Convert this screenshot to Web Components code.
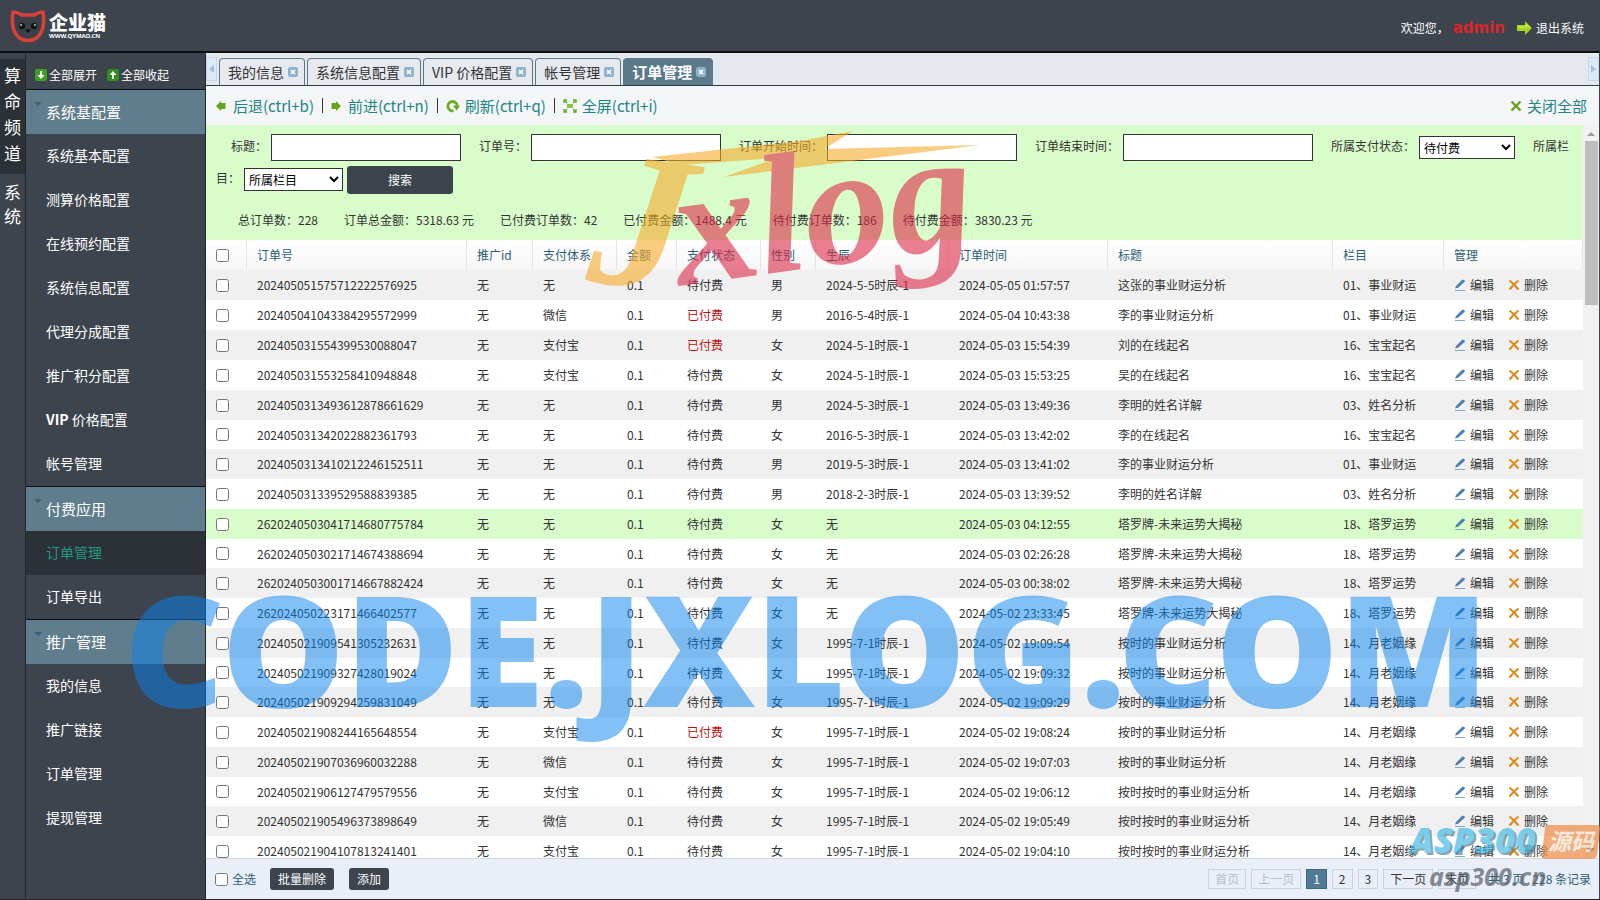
<!DOCTYPE html>
<html lang="zh-CN">
<head>
<meta charset="utf-8">
<title>订单管理</title>
<style>
html,body{margin:0;height:100%}
body{font:12px/20px "Noto Sans CJK SC","Liberation Sans",sans-serif;color:#333;background:#3d444e;overflow:hidden}
</style>
</head>
<body>
<admin-app></admin-app>
<script>
const define = (name, html, setup) => {
  const tpl = document.createElement('template');
  tpl.innerHTML = '<style>*{box-sizing:border-box}a{color:inherit;text-decoration:none}button,input,select{font:inherit;margin:0}svg{display:block;flex:none}</style>' + html;
  customElements.define(name, class extends HTMLElement {
    connectedCallback() {
      if (this.shadowRoot) return;
      this.attachShadow({mode: 'open'}).append(tpl.content.cloneNode(true));
      if (setup) setup(this.shadowRoot, this);
    }
  });
};

const icons = {
  left: '<svg width="10" height="10" viewBox="0 0 10 10"><path d="M0 5 5 0V2H9.5V8H5V10Z" fill="#62a51d"/></svg>',
  right: '<svg width="10" height="10" viewBox="0 0 10 10"><path d="M10 5 5 0V2H.5V8H5V10Z" fill="#62a51d"/></svg>',
  refresh: '<svg width="14" height="14" viewBox="0 0 14 14"><path d="M7.500 11.800A4.700 4.700 0 1 1 11.200 6.500" fill="none" stroke="#6bac22" stroke-width="2.800"/><path d="M7 6.500H14L10.800 11.500Z" fill="#62a51d"/></svg>',
  full: '<svg width="14" height="14" viewBox="0 0 14 14"><path d="M1 4V1H4M10 1H13V4M13 10V13H10M4 13H1V10M2 2 4 4M12 2 10 4M2 12 4 10M12 12 10 10" fill="none" stroke="#62a51d" stroke-width="1.300"/><rect x="4" y="5" width="6" height="4" fill="#8cc63f"/></svg>',
  close: '<svg width="12" height="12" viewBox="0 0 12 12"><path d="M1.500 1.500 10.500 10.500M10.500 1.500 1.500 10.500" stroke="#6a9e1f" stroke-width="2.400"/></svg>',
  exit: '<svg width="15" height="14" viewBox="0 0 15 14"><path d="M0 4H8V0L15 7 8 14V10H0Z" fill="#a4d41c"/><path d="M1 6H9.500V3.500L13 7" fill="none" stroke="#d2ee6a"/></svg>',
  x: '<svg width="10" height="10" viewBox="0 0 10 10"><rect width="10" height="10" rx="2" fill="#8fb3ca"/><path d="M3 3 7 7M7 3 3 7" stroke="#fff" stroke-width="1.600"/></svg>',
  edit: '<svg width="12" height="12" viewBox="0 0 12 12"><path d="M1 9.500 2 7 8.500 .5 11 1.500 10.500 3 4 8.800Z" fill="#4d7fb0"/><path d="M1 11.500H11" stroke="#7fa9c9"/></svg>',
  del: '<svg width="12" height="12" viewBox="0 0 12 12"><path d="M1.500 1.500Q6 5 10.500 10.500M10.500 1.500Q5 6 1.500 10.500" fill="none" stroke="#dd8a1e" stroke-width="2.200"/></svg>',
  expand: '<svg width="12" height="12" viewBox="0 0 12 12"><rect width="12" height="12" rx="2" fill="#3f9d23"/><path d="M5 2H7V6H9.500L6 10 2.500 6H5Z" fill="#fff"/></svg>',
  collapse: '<svg width="12" height="12" viewBox="0 0 12 12"><rect width="12" height="12" rx="2" fill="#2f8e1f"/><path d="M5 10H7V6H9.500L6 2 2.500 6H5Z" fill="#fff"/></svg>'
};

define('ui-icon', '<style>:host{display:inline-flex;flex:none}</style>', (r, el) => {
  r.append(document.createRange().createContextualFragment(icons[el.getAttribute('name')]));
});

define('app-header', `
<style>
:host{display:flex;align-items:center;justify-content:space-between;height:53px;flex:none;border-bottom:2px solid #0c0e11;background:#3d444e;color:#fff;padding:0 16px 0 10px}
.logo{display:flex;gap:3px;align-items:center}
.name b{display:block;font-size:19px;line-height:20px;font-weight:900}
.name small{display:block;font:bold 6px/8px "Noto Sans",sans-serif}
.user{display:flex;align-items:center;gap:4px;padding-top:4px}
.user b{font:bold 15px/20px "DejaVu Sans",sans-serif;color:#d9282b;margin-right:8px}
a{display:flex;align-items:center;gap:4px}
</style>
<div class="logo">
<svg width="36" height="34" viewBox="0 0 36 34"><path d="M3 3C8 3 9 5 12 6H24C27 5 28 3 33 3 34 9 34 14 32.500 20 30 28 24 31.500 18 31.500S6 28 3.500 20C2 14 2 9 3 3Z" fill="#3d3f47" stroke="#d8413a" stroke-width="3.600" stroke-linejoin="round"/><circle cx="12" cy="17" r="3.200" fill="#14181c"/><circle cx="24" cy="17" r="3.200" fill="#14181c"/><circle cx="11" cy="16" r="1" fill="#b8c4c8"/><circle cx="25" cy="16" r="1" fill="#b8c4c8"/><path d="M15 20.500H21L18 24Z" fill="#0b0d10"/></svg>
<div class="name"><b>企业猫</b><small>WWW.QYMAO.CN</small></div>
</div>
<div class="user"><span>欢迎您，</span><b>admin</b><a href="#"><ui-icon name="exit"></ui-icon>退出系统</a></div>`);

define('channel-rail', `
<style>
:host{display:flex;flex-direction:column;width:26px;flex:none;padding-top:6px;font-size:17px;color:#fff;border-right:1px solid #22262c}
a{display:block;text-align:center;padding:3px 4px 8px;line-height:26px}
.on{background:#2c3037}
a+a{line-height:24px;padding-top:6px}
</style><a class="on" href="#">算命频道</a><a href="#">系统</a>`);

define('side-group', `
<style>
:host{display:block;border-top:1px solid #0c0e11}
h2{position:relative;margin:0;font-size:15px;font-weight:400;line-height:44px;padding-left:20px;background:#5f7d8c;color:#fff}
h2::before{content:"";position:absolute;left:8px;top:12px;border:4px solid transparent;border-top-color:#36627d}
</style><h2></h2><slot></slot>`, (r, el) => { r.querySelector('h2').textContent = el.getAttribute('label'); });

define('side-item', `
<style>
:host{display:block;font-size:14px;color:#fff}
:host([on]){background:#2c3037;color:#1d9a80}
a{display:block;line-height:42px;padding:0 0 2px 20px}
</style><a href="#"><slot></slot></a>`);

define('side-menu', `
<style>
:host{display:block;width:180px;flex:none;border-right:1px solid #22262c}
.top{display:flex;gap:10px;height:36px;padding:7px 0 0 9px;color:#fff}
.top a{display:flex;align-items:center;gap:2px;line-height:30px;height:30px}
</style>
<div class="top"><a href="#"><ui-icon name="expand"></ui-icon>全部展开</a><a href="#"><ui-icon name="collapse"></ui-icon>全部收起</a></div>
<side-group label="系统基配置"><side-item>系统基本配置</side-item><side-item>测算价格配置</side-item><side-item>在线预约配置</side-item><side-item>系统信息配置</side-item><side-item>代理分成配置</side-item><side-item>推广积分配置</side-item><side-item><b>VIP</b> 价格配置</side-item><side-item>帐号管理</side-item></side-group>
<side-group label="付费应用"><side-item on>订单管理</side-item><side-item>订单导出</side-item></side-group>
<side-group label="推广管理"><side-item>我的信息</side-item><side-item>推广链接</side-item><side-item>订单管理</side-item><side-item>提现管理</side-item></side-group>`);

define('tab-item', `
<style>
:host{display:flex;align-items:center;gap:4px;height:27px;padding:0 6px 0 8px;border:1px solid #5d7a8a;border-bottom:0;border-radius:4px 4px 0 0;background:#e6e9ee;font-size:14px}
:host([on]){background:#5a7989;color:#fff;font-weight:700;font-size:15px}
button{border:0;padding:0;background:none;display:flex}
</style><a href="#"><slot></slot></a><button aria-label="关闭"><ui-icon name="x"></ui-icon></button>`);

define('tab-strip', `
<style>
:host{display:flex;align-items:flex-end;gap:2px;height:33px;background:#e5e9ee;border-bottom:1px solid #2d3b47;flex:none}
.nav{width:11px;height:24px;border:1px solid #c3d6ee;background:#dce9f8;padding:0;display:flex;align-items:center;justify-content:center;margin-bottom:4px}
.end{margin-left:auto}
</style>
<button class="nav" aria-label="向左"><svg width="5" height="8"><path d="M5 0V8L0 4Z" fill="#a3bfe0"/></svg></button>
<tab-item>我的信息</tab-item><tab-item>系统信息配置</tab-item><tab-item>VIP 价格配置</tab-item><tab-item>帐号管理</tab-item><tab-item on>订单管理</tab-item>
<button class="nav end" aria-label="向右"><svg width="5" height="8"><path d="M0 0V8L5 4Z" fill="#a3bfe0"/></svg></button>`);

define('tool-bar', `
<style>
:host{display:flex;align-items:center;height:39px;flex:none;background:#f3f5f7;padding:0 12px 0 10px;color:#1c8583;font-size:15px}
a{display:flex;align-items:center;gap:7px}
a.n{gap:5px}
i{width:1px;height:15px;background:#333;margin:0 8px}
a:last-child{margin-left:auto}
</style>
<a href="#"><ui-icon name="left"></ui-icon>后退(ctrl+b)</a><i></i><a href="#"><ui-icon name="right"></ui-icon>前进(ctrl+n)</a><i></i><a class="n" href="#"><ui-icon name="refresh"></ui-icon>刷新(ctrl+q)</a><i></i><a class="n" href="#"><ui-icon name="full"></ui-icon>全屏(ctrl+i)</a>
<a class="n" href="#"><ui-icon name="close"></ui-icon>关闭全部</a>`);

define('order-filter', `
<style>
:host{display:block;background:#d9fdca;padding:5px 8px 5px 10px;height:115px}
form{line-height:32px}
label{margin-left:18px}
label:first-child{margin-left:15px}
input{width:190px;height:27px;border:1px solid #333;background:#fff;margin-left:4px;padding:0 4px;vertical-align:middle}
select{width:96px;height:23px;border:1px solid #333;border-radius:0;background:#fff;color:#000;margin-left:4px;vertical-align:middle}
button{width:106px;height:28px;line-height:20px;border:0;border-radius:3px;background:#3d444e;color:#fff;margin-left:4px;vertical-align:middle}
.w{width:99px}
.stats{display:flex;gap:26px;padding:16px 0 0 22px;line-height:20px}
.stats span{white-space:pre}
</style>
<form onsubmit="return false"><label for="a">标题：</label><input id="a"><label for="b">订单号：</label><input id="b"><label for="c">订单开始时间：</label><input id="c"><label for="d">订单结束时间：</label><input id="d"><label for="e">所属支付状态：</label><select id="e"><option>待付费</option></select><label for="f">所属栏目：</label><select id="f" class="w"><option>所属栏目</option></select><button>搜索</button></form>
<div class="stats"><span>总订单数：228</span><span>订单总金额：5318.63 元</span><span>已付费订单数：42</span><span>已付费金额：1488.4 元</span><span>待付费订单数：186</span><span>待付费金额：3830.23 元</span></div>`);

const rows = `202405051575712222576925|无|待付费|男|2024-5-5时辰-1|05-05 01:57:57|这张的事业财运分析|01、事业财运
202405041043384295572999|微信|已付费|男|2016-5-4时辰-1|05-04 10:43:38|李的事业财运分析|01、事业财运
202405031554399530088047|支付宝|已付费|女|2024-5-1时辰-1|05-03 15:54:39|刘的在线起名|16、宝宝起名
202405031553258410948848|支付宝|待付费|女|2024-5-1时辰-1|05-03 15:53:25|吴的在线起名|16、宝宝起名
2024050313493612878661629|无|待付费|男|2024-5-3时辰-1|05-03 13:49:36|李明的姓名详解|03、姓名分析
202405031342022882361793|无|待付费|女|2016-5-3时辰-1|05-03 13:42:02|李的在线起名|16、宝宝起名
2024050313410212246152511|无|待付费|男|2019-5-3时辰-1|05-03 13:41:02|李的事业财运分析|01、事业财运
202405031339529588839385|无|待付费|男|2018-2-3时辰-1|05-03 13:39:52|李明的姓名详解|03、姓名分析
2620240503041714680775784|无|待付费|女|无|05-03 04:12:55|塔罗牌-未来运势大揭秘|18、塔罗运势
2620240503021714674388694|无|待付费|女|无|05-03 02:26:28|塔罗牌-未来运势大揭秘|18、塔罗运势
2620240503001714667882424|无|待付费|女|无|05-03 00:38:02|塔罗牌-未来运势大揭秘|18、塔罗运势
262024050223171466402577|无|待付费|女|无|05-02 23:33:45|塔罗牌-未来运势大揭秘|18、塔罗运势
202405021909541305232631|无|待付费|女|1995-7-1时辰-1|05-02 19:09:54|按时的事业财运分析|14、月老姻缘
202405021909327428019024|无|待付费|女|1995-7-1时辰-1|05-02 19:09:32|按时的事业财运分析|14、月老姻缘
202405021909294259831049|无|待付费|女|1995-7-1时辰-1|05-02 19:09:29|按时的事业财运分析|14、月老姻缘
202405021908244165648554|支付宝|已付费|女|1995-7-1时辰-1|05-02 19:08:24|按时的事业财运分析|14、月老姻缘
202405021907036960032288|微信|待付费|女|1995-7-1时辰-1|05-02 19:07:03|按时的事业财运分析|14、月老姻缘
202405021906127479579556|支付宝|待付费|女|1995-7-1时辰-1|05-02 19:06:12|按时按时的事业财运分析|14、月老姻缘
202405021905496373898649|微信|待付费|女|1995-7-1时辰-1|05-02 19:05:49|按时按时的事业财运分析|14、月老姻缘
202405021904107813241401|支付宝|待付费|女|1995-7-1时辰-1|05-02 19:04:10|按时按时的事业财运分析|14、月老姻缘`.split('\n').map(l => l.split('|'));

define('order-table', `
<style>
:host{display:block}
table{width:100%;table-layout:fixed;border-collapse:separate;border-spacing:0}
th,td{padding:0 0 0 10px;text-align:left;font-weight:400;white-space:nowrap;line-height:20px;height:30px}
th{color:#2c6078;background:linear-gradient(#fff,#f6f6f6);border-right:1px solid #e6e6e6}
tbody tr{background:#fff}
tbody tr:nth-child(odd){background:#f0f0f0}
tbody tr:nth-child(9){background:#d9fdca}
tr:nth-child(4n+6) td{height:29px}
input{display:block;width:13px;height:13px}
.paid{color:#c00e0e}
.ops{display:flex;gap:14px}
.ops a{display:flex;align-items:center;gap:4px}
</style>
<table><colgroup><col style="width:41px"><col style="width:220px"><col style="width:66px"><col style="width:84px"><col style="width:60px"><col style="width:84px"><col style="width:55px"><col style="width:133px"><col style="width:159px"><col><col style="width:111px"><col style="width:139px"></colgroup>
<thead><tr><th><input type="checkbox" aria-label="全选"></th><th>订单号</th><th>推广id</th><th>支付体系</th><th>金额</th><th>支付状态</th><th>性别</th><th>生辰</th><th>订单时间</th><th>标题</th><th>栏目</th><th>管理</th></tr></thead><tbody></tbody></table>`, r => {
  r.querySelector('tbody').innerHTML = rows.map(([id, pay, st, sex, born, time, title, cat]) =>
    `<tr><td><input type="checkbox" aria-label="${id}"></td><td>${id}</td><td>无</td><td>${pay}</td><td>0.1</td><td${st === '已付费' ? ' class="paid"' : ''}>${st}</td><td>${sex}</td><td>${born}</td><td>2024-${time}</td><td>${title}</td><td>${cat}</td><td><div class="ops"><a href="#"><ui-icon name="edit"></ui-icon>编辑</a><a href="#"><ui-icon name="del"></ui-icon>删除</a></div></td></tr>`).join('');
});

define('page-footer', `
<style>
:host{display:flex;align-items:center;justify-content:space-between;height:41px;flex:none;background:#e9eef8;border-top:1px solid #cddbe0;padding:0 8px 0 9px;color:#2c6078}
div{display:flex;align-items:center}
label{display:flex;align-items:center;gap:4px}
input{width:13px;height:13px}
.act button{height:22px;border:0;border-radius:3px;background:#3d444e;color:#fff;padding:0 8px;margin-right:15px}
.act label{margin-right:14px}
nav{display:flex;align-items:center;gap:5px;color:#333}
nav a,nav span{border:1px solid #cbd3de;line-height:18px;padding:0 6px}
nav span{color:#b9bfc9}
nav .on{background:#4f7b97;border-color:#3d6681;color:#fff}
p{margin:0 0 0 12px;white-space:pre}
</style>
<div class="act"><label><input type="checkbox">全选</label><button>批量删除</button><button>添加</button></div>
<div><nav><span>首页</span><span>上一页</span><a class="on" href="#">1</a><a href="#">2</a><a href="#">3</a><a href="#">下一页</a><a href="#">末页</a></nav><p>共 3 页   228 条记录</p></div>`);

define('scroll-rail', `
<style>
:host{display:flex;flex-direction:column;align-items:center;width:16px;flex:none;background:#f1f1f1}
svg{margin:7px 0 5px}
div{width:13px;height:164px;background:#bdbdbd}
svg:last-child{margin:auto 0 6px}
</style><svg width="8" height="4"><path d="M0 4H8L4 0Z" fill="#9a9a9a"/></svg><div></div><svg width="8" height="4"><path d="M0 0H8L4 4Z" fill="#555"/></svg>`);

define('water-marks', `
<style>
:host{position:absolute;inset:0;pointer-events:none;overflow:hidden}
svg{position:absolute;left:0;top:0;overflow:visible}
</style>
<svg width="1600" height="900" viewBox="0 0 1600 900">
<text x="124" y="707" font-family="Noto Sans" font-weight="900" font-size="155" fill="#0883ef" opacity=".5">CODE.JXLOG.COM</text>
<g opacity=".6">
<path d="M652 157 800 141 853 131 824 149 980 145 724 177 776 158 682 165Z" fill="#f5ab2c"/>
<text transform="translate(585 280) rotate(8)" font-family="Liberation Serif" font-weight="700" font-style="italic" font-size="196" fill="#f5ab2c">J</text>
<text transform="translate(680 286) rotate(-8)" font-family="Liberation Serif" font-weight="700" font-style="italic" font-size="170" fill="#dc2a48">xlog</text>
</g>
<g opacity=".7">
<text x="1412" y="855" font-family="Noto Sans" font-weight="900" font-style="italic" font-size="35" fill="#5f7d8c">ASP300</text>
<text x="1410" y="853" font-family="Noto Sans" font-weight="900" font-style="italic" font-size="35" fill="#45bce4">ASP300</text>
<path d="M1549 825H1597Q1600 825 1600 829L1597 855Q1596 859 1591 859H1545Q1541 859 1542 855L1545 828Q1545 825 1549 825Z" fill="#ee8b45"/>
<text x="1548" y="850" font-family="Noto Sans CJK SC" font-weight="700" font-style="italic" font-size="23" fill="#f8e3d0">源码</text>
<text x="1429" y="886" font-family="Noto Sans" font-weight="700" font-style="italic" font-size="25" fill="#5b6068">asp300.cn</text>
</g>
</svg>`);

define('admin-app', `
<style>
:host{display:flex;flex-direction:column;position:relative;height:100vh;overflow:hidden}
.body{display:flex;flex:1;min-height:0;border-bottom:1px solid #22262c}
main{display:flex;flex-direction:column;flex:1;min-width:0;background:#fff;margin-right:1px}
.view{display:flex;flex:1;min-height:0}
.scroll{flex:1;min-width:0;overflow:hidden}
</style>
<app-header></app-header>
<div class="body"><channel-rail></channel-rail><side-menu></side-menu>
<main><tab-strip></tab-strip><tool-bar></tool-bar><div class="view"><div class="scroll"><order-filter></order-filter><order-table></order-table></div><scroll-rail></scroll-rail></div><page-footer></page-footer></main></div>
<water-marks></water-marks>`);
</script>
</body>
</html>
